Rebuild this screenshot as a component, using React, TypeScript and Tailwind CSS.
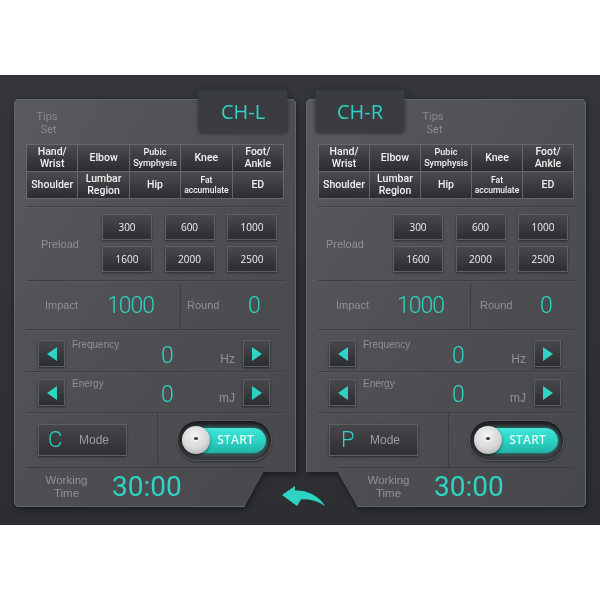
import React from "react";

type Side = "L" | "R";

const gridRows: { l: string[]; s: string }[][] = [
  [
    { l: ["Hand/", "Wrist"], s: "text-[10.5px] leading-[12px]" },
    { l: ["Elbow"], s: "text-[10.5px] leading-[12px]" },
    { l: ["Pubic", "Symphysis"], s: "text-[9px] leading-[11px]" },
    { l: ["Knee"], s: "text-[10.5px] leading-[12px]" },
    { l: ["Foot/", "Ankle"], s: "text-[10.5px] leading-[12px]" },
  ],
  [
    { l: ["Shoulder"], s: "text-[10.5px] leading-[12px]" },
    { l: ["Lumbar", "Region"], s: "text-[10.5px] leading-[12px]" },
    { l: ["Hip"], s: "text-[10.5px] leading-[12px]" },
    { l: ["Fat", "accumulate"], s: "text-[8.5px] leading-[10px]" },
    { l: ["ED"], s: "text-[10.5px] leading-[12px]" },
  ],
];

const preload = ["300", "600", "1000", "1600", "2000", "2500"];

function ArrowBtn({ dir }: { dir: "left" | "right" }) {
  return (
    <div className="w-[27px] h-[27px] shrink-0 flex items-center justify-center bg-linear-to-b from-[#46484b] to-[#2c2e31] border border-[#5c5e61] shadow-[0_1px_2px_rgba(0,0,0,0.5)]">
      <svg width="10" height="14" viewBox="0 0 10 14">
        {dir === "left" ? (
          <polygon points="10,0 10,14 0,7" fill="#2fd3c3" />
        ) : (
          <polygon points="0,0 0,14 10,7" fill="#2fd3c3" />
        )}
      </svg>
    </div>
  );
}

function AdjRow({
  label,
  unit,
  side,
  outer,
}: {
  label: string;
  unit: string;
  side: Side;
  outer: string;
}) {
  const isL = side === "L";
  return (
    <div className={outer}>
      <div className={`flex w-full ${isL ? "pl-[12px] pr-[14px]" : "pl-[11px] pr-[13px]"}`}>
        <ArrowBtn dir="left" />
        <div className="w-[96px] pl-[7px] -mt-[1px] text-[10px] leading-[12px] text-[#8f9194] font-['Liberation_Sans',Arial,sans-serif]">
          {label}
        </div>
        <div className="self-center mt-[3px] text-[23px] leading-none text-[#2fd3c3] font-['Roboto',sans-serif] font-light">
          0
        </div>
        <div className="flex-1" />
        <div className="self-end mb-[2px] mr-[8px] text-[12px] leading-none text-[#8f9194] font-['Liberation_Sans',Arial,sans-serif]">
          {unit}
        </div>
        <ArrowBtn dir="right" />
      </div>
    </div>
  );
}

function Toggle() {
  return (
    <div className="relative w-[95px] h-[41px] rounded-full bg-linear-to-b from-[#2e3033] to-[#3c3e41] border border-[#55575a] shadow-[inset_0_2px_5px_rgba(0,0,0,0.6),0_1px_2px_rgba(0,0,0,0.4)]">
      <div className="absolute left-[14px] right-[5px] top-[7px] bottom-[7px] rounded-full bg-linear-to-b from-[#43e6d8] via-[#2cd3c4] to-[#1fb4a8] shadow-[0_0_4px_rgba(47,211,195,0.6)] flex items-center justify-end pr-[12px]">
        <span className="text-[12px] font-semibold leading-none text-[#dcfbf7] font-['Open_Sans',sans-serif] tracking-[0.2px]">
          START
        </span>
      </div>
      <div className="absolute left-[4px] top-[5px] w-[28px] h-[28px] rounded-full bg-[radial-gradient(circle_at_45%_35%,#f4f4f4_0%,#d6d6d6_55%,#9e9e9e_100%)] shadow-[0_1px_3px_rgba(0,0,0,0.6)] flex items-center justify-center">
        <div className="w-[4px] h-[3px] -mt-[3px] rounded-full bg-[#444] shadow-[0_1px_0_rgba(255,255,255,0.8)]" />
      </div>
    </div>
  );
}

function Panel({ side }: { side: Side }) {
  const isL = side === "L";
  const divider = "border-t border-[#3c3e41] shadow-[inset_0_1px_0_rgba(255,255,255,0.04)]";
  const labelCls = "text-[#8f9194] font-['Liberation_Sans',Arial,sans-serif]";
  const tips = (
    <div
      className={`${isL ? "ml-[9px]" : "ml-[17px]"} mt-[10px] w-[24px] text-center text-[11px] leading-[13px] text-[#8a8c8f] font-['Roboto',sans-serif]`}
    >
      <div>Tips</div>
      <div className="pl-[3px]">Set</div>
    </div>
  );
  const tab = (
    <div
      className={`${isL ? "-mr-[3px]" : "-ml-[2px]"} -mt-[9px] w-[88px] h-[42px] rounded-[4px] bg-[#3a3c3f] shadow-[0_0_4px_rgba(0,0,0,0.55)] flex items-center justify-center text-[20px] text-[#2fd3c3] font-['Open_Sans',sans-serif]`}
    >
      {isL ? "CH-L" : "CH-R"}
    </div>
  );

  return (
    <div className="[filter:drop-shadow(0_0_0.7px_#7aa09b)_drop-shadow(1px_2px_3px_rgba(0,0,0,0.45))]">
      <div
        className={`${
          isL
            ? "w-[282px] [clip-path:polygon(0_-14px,100%_-14px,100%_calc(100%_-_35px),calc(100%_-_33px)_calc(100%_-_35px),calc(100%_-_52px)_100%,0_100%)]"
            : "w-[280px] [clip-path:polygon(0_-14px,100%_-14px,100%_100%,52px_100%,32px_calc(100%_-_35px),0_calc(100%_-_35px))]"
        } h-[408px] rounded-[5px] border border-[#5b6a69] bg-linear-to-br from-[#585a5d] via-[#4d4f52] to-[#46484b] flex flex-col px-[11px]`}
      >
        {/* header */}
        <div className={`h-[44px] flex ${isL ? "justify-between" : "justify-start"}`}>
          {isL ? (
            <>
              {tips}
              {tab}
            </>
          ) : (
            <>
              {tab}
              {tips}
            </>
          )}
        </div>

        {/* tips grid */}
        <div className="h-[55px] grid grid-cols-5 grid-rows-2 gap-px p-px bg-[#66686b]">
          {gridRows.flat().map((b, i) => (
            <div
              key={i}
              className="flex flex-col items-center justify-center bg-linear-to-b from-[#4a4c4f] to-[#2b2d30] text-[#f2f2f2] font-medium font-['Roboto',sans-serif] text-center"
            >
              {b.l.map((t) => (
                <span key={t} className={`block ${b.s}`}>
                  {t}
                </span>
              ))}
            </div>
          ))}
        </div>

        <div className="h-[7px]" />

        {/* preload */}
        <div className={`h-[74px] ${divider} flex pt-[7px]`}>
          <div
            className={`${isL ? "w-[76px] pl-[15px]" : "w-[75px] pl-[8px]"} self-center mb-[6px] text-[11px] ${labelCls}`}
          >
            Preload
          </div>
          <div className="grid grid-cols-[50px_50px_50px] gap-x-[12.5px] gap-y-[6px] h-[58px]">
            {preload.map((p) => (
              <div
                key={p}
                className="h-[26px] flex items-center justify-center bg-linear-to-b from-[#47494c] to-[#2c2e31] border border-[#5e6063] shadow-[0_1px_2px_rgba(0,0,0,0.45)] text-[10px] text-[#f0f0f0] font-['Open_Sans',sans-serif]"
              >
                {p}
              </div>
            ))}
          </div>
        </div>

        {/* impact / round */}
        <div className={`h-[49px] ${divider} flex`}>
          <div className={`${isL ? "w-[154px]" : "w-[152px]"} flex items-center`}>
            <div className={`${isL ? "w-[81px] pl-[19px]" : "w-[79px] pl-[18px]"} text-[11px] ${labelCls}`}>
              Impact
            </div>
            <div className="text-[23px] leading-none tracking-[-1px] text-[#2fd3c3] font-['Roboto',sans-serif] font-light">
              1000
            </div>
          </div>
          <div className="flex-1 flex items-center border-l border-[#3c3e41] mt-[3px]">
            <div className={`${isL ? "w-[67px] pl-[6px]" : "w-[69px] pl-[9px]"} -mt-[3px] text-[11px] ${labelCls}`}>
              Round
            </div>
            <div className="-mt-[3px] text-[23px] leading-none text-[#2fd3c3] font-['Roboto',sans-serif] font-light">
              0
            </div>
          </div>
        </div>

        <AdjRow label="Frequency" unit="Hz" side={side} outer={`h-[42px] ${divider} pt-[10px]`} />
        <AdjRow label="Energy" unit="mJ" side={side} outer={`h-[41px] ${divider} pt-[7px]`} />

        {/* mode / start */}
        <div className={`h-[55px] ${divider} flex`}>
          <div className={`${isL ? "w-[131px] pl-[12px]" : "w-[130px] pl-[11px]"} flex items-center`}>
            <div
              className={`w-[89px] h-[32px] flex items-center ${isL ? "pl-[9px]" : "pl-[11px]"} bg-linear-to-b from-[#45474a] to-[#2e3033] border border-[#5c5e61] shadow-[0_1px_2px_rgba(0,0,0,0.5)]`}
            >
              <span className={`${isL ? "w-[31px]" : "w-[29px]"} text-[22px] leading-none text-[#2fd3c3] font-['Roboto',sans-serif] font-light`}>
                {isL ? "C" : "P"}
              </span>
              <span className="text-[12px] text-[#9c9ea1] font-['Liberation_Sans',Arial,sans-serif]">Mode</span>
            </div>
          </div>
          <div className={`flex-1 flex items-center justify-end border-l border-[#3c3e41] ${isL ? "pr-[12px]" : "pr-[10px]"}`}>
            <Toggle />
          </div>
        </div>

        {/* working time */}
        <div className={`flex-1 flex items-center border-t border-[#3c3e41] ${isL ? "pl-[19px] mr-[20px]" : "pl-[49px] ml-[20px]"}`}>
          <div className={`${isL ? "" : "-ml-[20px]"} w-[43px] text-center text-[11.5px] leading-[13px] ${labelCls}`}>
            <div>Working</div>
            <div>Time</div>
          </div>
          <div className="ml-[24px] text-[28px] leading-none text-[#2fd3c3] font-['Roboto',sans-serif]">30:00</div>
        </div>
      </div>
    </div>
  );
}

export default function App() {
  return (
    <div className="w-[600px] h-[600px] bg-white pt-[75px]">
      <div className="relative h-[450px] bg-linear-to-b from-[#343639] to-[#2c2e31] flex gap-[10px] pl-[14px] pt-[24px]">
        <Panel side="L" />
        <Panel side="R" />
        <svg
          className="absolute left-[282px] top-[408px]"
          width="44"
          height="25"
          viewBox="0 0 44 25"
        >
          <path
            d="M0 12 L13 3 L13 7.5 C26 7 37 13 43 23 C35 17.5 27 15.5 19 16.5 L15 23 Z"
            fill="#2fd3c3"
          />
        </svg>
      </div>
    </div>
  );
}
